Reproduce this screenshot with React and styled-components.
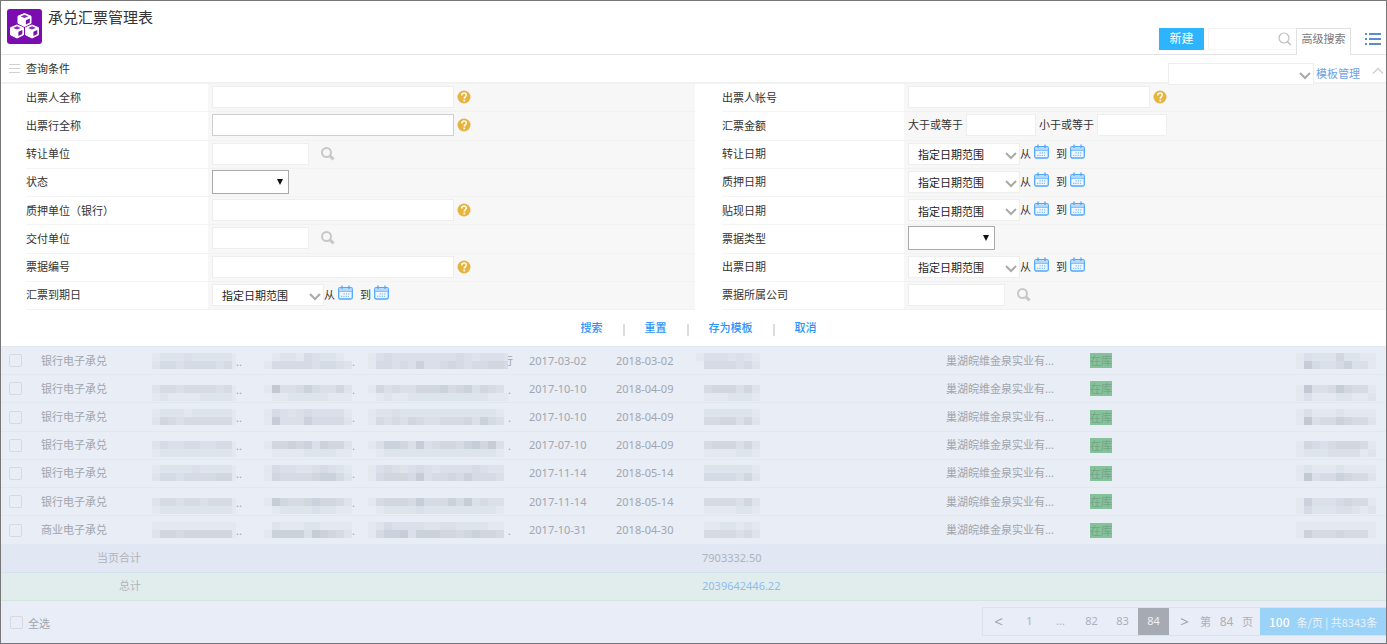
import React from 'react';
import styled, { createGlobalStyle, css } from 'styled-components';

const GlobalStyle = createGlobalStyle`
    * {
        box-sizing: border-box;
    }
    body {
        margin: 0;
        background: #fff;
        color: #333;
        font-family: "Noto Sans", "Noto Sans CJK SC", sans-serif;
        font-size: 11px;
        line-height: 16px;
    }
    button, input, select {
        margin: 0;
        padding: 0;
        font: inherit;
        color: inherit;
    }
    button {
        border: 0;
        background: none;
        cursor: pointer;
    }
    svg {
        display: block;
        flex: none;
    }
`;

const Page = styled.div`
    display: flex;
    flex-direction: column;
    min-height: 100vh;
    border: 1px solid #777;
`;

const Header = styled.header`
    display: flex;
    justify-content: space-between;
    height: 54px;
    padding-left: 6px;
    border-bottom: 1px solid #e4e4e4;
`;

const Brand = styled.div`
    display: flex;
    gap: 6px;
    padding-top: 8px;
`;

const Logo = styled.div`
    width: 35px;
    height: 35px;
    border-radius: 3px;
    background: #7a0cb0;
`;

const Title = styled.h1`
    margin: 0;
    font-size: 15px;
    font-weight: 400;
    line-height: 16px;
`;

const Tools = styled.div`
    display: flex;
    align-items: flex-start;
    padding-top: 27px;
`;

const CreateButton = styled.button`
    width: 45px;
    height: 22px;
    margin-right: 4px;
    background: #2eb4ff;
    color: #fff;
    font-size: 12px;
`;

const SearchBox = styled.label`
    display: flex;
    align-items: center;
    width: 88px;
    height: 22px;
    padding-right: 4px;
    border: 1px solid #f4f4f4;
    border-right: 0;
    input {
        flex: 1;
        min-width: 0;
        border: 0;
        outline: 0;
    }
`;

const AdvancedTab = styled.button`
    position: relative;
    width: 55px;
    height: 27px;
    padding-bottom: 6px;
    border: 1px solid #e0e0e0;
    border-bottom: 0;
    background: #fff;
    color: #777;
`;

const ListButton = styled.button`
    margin: 4px 4px 0 14px;
`;

const SectionBar = styled.div`
    display: flex;
    align-items: center;
    justify-content: space-between;
    height: 29px;
    padding: 0 2px 0 8px;
    border-bottom: 2px solid #f2f2f2;
`;

const SectionTitle = styled.div`
    display: flex;
    align-items: center;
    gap: 6px;
`;

const TemplateTools = styled.div`
    position: relative;
    display: flex;
    align-items: center;
    gap: 2px;
    padding-top: 10px;
    a {
        color: #6f9fe4;
        text-decoration: none;
    }
    button {
        padding: 0 0 6px 10px;
    }
`;

const Filters = styled.form`
    display: grid;
    grid-template-columns: 207px minmax(0, 487fr) 209px minmax(0, 482fr);
    grid-auto-rows: 1fr;
    min-height: 226px;
`;

const LabelCell = styled.div`
    display: flex;
    padding-left: ${props => (props.$second ? 27 : 25)}px;
    label {
        flex: 1;
        align-self: stretch;
        display: flex;
        align-items: center;
        border-bottom: 1px solid #f4f4f4;
    }
`;

const ValueCell = styled.div`
    display: flex;
    align-items: center;
    min-width: 0;
    padding: 0 0 1px 4px;
    border-bottom: 1px solid #f2f2f2;
    background: #f7f7f7;
`;

const widths = { full: 242, short: 97, amount: 70 };

const TextInput = styled.input`
    width: ${props => widths[props.$size]}px;
    height: 22px;
    border: 1px solid ${props => (props.$strong ? '#cfcfcf' : '#eee')};
    background: #fff;
`;

const IconButton = styled.button`
    margin-left: ${props => props.$gap}px;
`;

const SelectWrap = styled.div`
    position: relative;
    width: ${props => props.$width}px;
    svg {
        position: absolute;
        top: 9px;
        right: ${props => (props.$native ? 6 : 3)}px;
        pointer-events: none;
    }
    select {
        display: block;
        width: 100%;
        height: ${props => (props.$native ? 24 : 22)}px;
        padding: 3px 0 0 9px;
        border: 1px solid ${props => (props.$native ? '#a9a9a9' : '#eee')};
        background: #fff;
        color: #222;
        appearance: none;
    }
`;

const DateParts = styled.div`
    display: flex;
    align-items: center;
    button {
        margin: 0 7px 4px 3px;
    }
`;

const AmountParts = styled.div`
    display: flex;
    align-items: center;
    gap: 3px;
`;

const Actions = styled.div`
    display: flex;
    align-items: center;
    justify-content: center;
    gap: 20px;
    height: 36px;
    padding-left: 10px;
    button {
        color: #2b93fb;
        font-weight: 500;
    }
    i {
        width: 2px;
        height: 12px;
        margin-top: 4px;
        background: #ddd;
    }
`;

const Table = styled.table`
    width: 100%;
    height: 255px;
    border-collapse: collapse;
    table-layout: fixed;
    background: #e8edf6;
    color: #a2a6ae;
    tr {
        height: 28px;
    }
    td {
        padding: 0;
        text-align: left;
        white-space: nowrap;
    }
`;

const Row = styled.tr`
    td {
        border-top: 1px solid #e3e7f0;
    }
`;

const SumRow = styled.tr`
    background: ${props => (props.$grand ? '#e1eded' : '#e1e7f3')};
    td {
        border-bottom: 1px solid ${props => (props.$grand ? '#d2e6dd' : '#d6e1ee')};
        color: #b0b3bb;
    }
    td:first-child {
        padding-right: 11px;
        text-align: right;
    }
    a {
        color: #8dbcf0;
        text-decoration: none;
    }
`;

const SumValue = styled.div`
    padding-left: 6px;
`;

const Check = styled.input`
    display: block;
    width: 13px;
    height: 13px;
    margin: 0 0 0 8px;
    border: 1px solid #d6d9e0;
    border-radius: 2px;
    appearance: none;
`;

const MaskedCell = styled.div`
    display: flex;
    align-items: center;
    height: 24px;
`;

const Cover = styled.div`
    position: relative;
    z-index: 1;
    background: #e8edf6;
`;

const Tail = styled.span`
    padding-top: 2px;
    ${props => props.$under && css`
        margin-left: -6px;
        padding-top: 0;
    `}
`;

const Tag = styled.span`
    display: block;
    width: 22px;
    height: 15px;
    background: #85c29a;
    color: #76a488;
    line-height: 15px;
`;

const Footer = styled.footer`
    flex: 1;
    display: flex;
    align-items: flex-start;
    justify-content: space-between;
    padding-top: 6px;
    background: #e9edf7;
    color: #a2a6ae;
`;

const SelectAll = styled.label`
    display: flex;
    align-items: center;
    gap: 5px;
    padding: 5px 0 0 1px;
    span {
        padding-top: 4px;
    }
`;

const Pager = styled.nav`
    display: flex;
    align-items: center;
    height: 29px;
    border: 1px solid #dde1ea;
    border-right: 0;
    color: #adb0b8;
`;

const PageButton = styled.button`
    width: 31px;
    height: 27px;
    padding-bottom: 1px;
    ${props => props.$active && css`
        background: #a6aab3;
        color: #eef0f5;
    `}
    ${props => props.$arrow && css`
        font-size: 15px;
        color: #9fa3ac;
    `}
`;

const JumpTo = styled.label`
    display: flex;
    align-items: center;
    width: 60px;
    input {
        width: 31px;
        height: 22px;
        border: 0;
        background: none;
        font-size: 12px;
        text-align: center;
    }
`;

const PageSize = styled.button`
    display: flex;
    align-items: center;
    gap: 7px;
    width: 126px;
    height: 27px;
    padding-left: 9px;
    background: #9bd2f7;
    color: #e9f3fc;
    font-family: "Noto Sans CJK SC", sans-serif;
    white-space: nowrap;
    b {
        color: #fff;
        font-size: 12px;
        font-weight: 500;
    }
`;

const CubesIcon = () => (
    <svg width="35" height="35" viewBox="0 0 35 35">
        {[[17.5, 11], [10, 22.5], [25, 22.5]].map(([x, y]) => (
            <g key={x} transform={`translate(${x} ${y})`}>
                <path d="M0-6.500L6.500-3.800V3.300L0 6.500-6.500 3.300V-3.800z" fill="#fff" stroke="#fff" strokeLinejoin="round" />
                <path d="M0-5.200L3.800-3.500 0-1.900-3.800-3.500z" fill="#8a2cba" />
                <path d="M1.400.2L5.300-1.600V2.500L1.400 4.500z" fill="#7a0cb0" />
            </g>
        ))}
    </svg>
);

const Magnifier = () => (
    <svg width="14" height="14" viewBox="0 0 14 14" fill="none" stroke="#c8c8c8">
        <circle cx="5.5" cy="5.5" r="4.5" strokeWidth="2" />
        <path d="M8.8 8.8l3.800 3.600" strokeWidth="3" />
    </svg>
);

const ThinMagnifier = () => (
    <svg width="14" height="14" viewBox="0 0 14 14" fill="none" stroke="#bfbfbf">
        <circle cx="6" cy="6" r="5" strokeWidth="1.2" />
        <path d="M9.7 10l3.2 3" strokeWidth="1.6" />
    </svg>
);

const ListIcon = () => (
    <svg width="17" height="14" viewBox="0 0 17 14" fill="#5b8dcb">
        {[0, 5, 10].map(y => (
            <g key={y}>
                <rect x="0" y={y + 1} width="2" height="2" />
                <rect x="4" y={y + 1} width="12" height="2" />
            </g>
        ))}
    </svg>
);

const BarsIcon = () => (
    <svg width="11" height="10" viewBox="0 0 11 10" stroke="#d0d0d0">
        <path d="M0 .5h11M0 4.500h11M0 8.500h11" />
    </svg>
);

const ChevronDown = () => (
    <svg width="12" height="8" viewBox="0 0 12 8" fill="none" stroke="#aaa" strokeWidth="2">
        <path d="M1 1l5 5 5-5" />
    </svg>
);

const ChevronUp = () => (
    <svg width="12" height="8" viewBox="0 0 12 8" fill="none" stroke="#d0d0d0" strokeWidth="1.3">
        <path d="M1 6.5l5-5 5 5" />
    </svg>
);

const Triangle = () => (
    <svg width="6" height="6" viewBox="0 0 6 6">
        <path d="M0 0h6L3 6z" fill="#111" />
    </svg>
);

const HelpIcon = () => (
    <svg width="14" height="14" viewBox="0 0 14 14" fill="none">
        <circle cx="7" cy="7" r="6.5" fill="#e4b340" />
        <path d="M4.800 5.400C4.800 3.800 5.800 3 7.100 3s2.200.8 2.200 2.100C9.300 6.600 7.300 6.700 7.300 8.800" stroke="#fff8e0" strokeWidth="1.7" />
        <rect x="6.300" y="9.700" width="1.900" height="1.700" fill="#fff8e0" />
    </svg>
);

const CalendarIcon = () => (
    <svg width="15" height="15" viewBox="0 0 15 15" fill="none">
        <rect x=".7" y="2.700" width="13.600" height="11.300" rx="1.500" fill="#f0f8ff" stroke="#53a7fb" strokeWidth="1.300" />
        <path d="M1.300 3.300h12.400v2.500H1.300z" fill="#b5d9fe" />
        <path d="M1 6.300h13" stroke="#6db3fb" />
        <path d="M4 .5v3.500M11 .5v3.500" stroke="#53a7fb" strokeWidth="1.300" />
        <path d="M5.500 8.800h7M3 11.300h8" stroke="#86c0fc" strokeWidth="1.200" strokeDasharray="1.300 1" />
    </svg>
);

// each digit is one 8px block, a higher digit is a darker block
const Mosaic = ({ bands, top, width }) => (
    <svg width={width} height="24" viewBox={`0 0 ${width} 24`} shapeRendering="crispEdges">
        {bands.map((band, i) => band.split('').map((level, j) => (
            <rect
                key={`${i}-${j}`}
                x={j * 8}
                y={top + i * 8}
                width="8"
                height="8"
                fill="#646c78"
                fillOpacity={level * 0.035}
            />
        )))}
    </svg>
);

const rows = [
    {
        type: '银行电子承兑', from: '2017-03-02', to: '2018-03-02', top: 4, end: '行',
        a: ['12223222221', '24434444341'],
        b: ['01221432210', '14444434432'],
        c: ['134333333334323332', '144343633454344554'],
        d: ['13332321', '04444342'],
        e: ['1322252211', '1743346331'],
    },
    {
        type: '银行电子承兑', from: '2017-10-10', to: '2018-04-09', top: 8, end: '.',
        a: ['24434444341', '12111122221'],
        b: ['18334643352', '01122222111'],
        c: ['153433555645635430', '012112222222222111'],
        d: ['04555352', '01112221'],
        e: ['1833475441', '1311122112'],
    },
    {
        type: '银行电子承兑', from: '2017-10-10', to: '2018-04-09', top: 4, end: '.',
        a: ['12221222221', '25434444441'],
        b: ['14323433331', '17333644442'],
        c: ['122322222222222210', '143435433444536430'],
        d: ['02222221', '04455352'],
        e: ['1311121111', '1834465442'],
    },
    {
        type: '银行电子承兑', from: '2017-07-10', to: '2018-04-09', top: 8, end: '.',
        a: ['24334433441', '12222222221'],
        b: ['15565636552', '01111222211'],
        c: ['136653734554675730', '012222222222222210'],
        d: ['04555352', '01111221'],
        e: ['1543455541', '1222333312'],
    },
    {
        type: '银行电子承兑', from: '2017-11-14', to: '2018-05-14', top: 4, end: '',
        a: ['12222322221', '24434444551'],
        b: ['14332234321', '15444456642'],
        c: ['134323432333343220', '145554734454644430'],
        d: ['02222221', '04444352'],
        e: ['1211121111', '1834465442'],
    },
    {
        type: '银行电子承兑', from: '2017-11-14', to: '2018-05-14', top: 8, end: '',
        a: ['24434434441', '12222222221'],
        b: ['17544565542', '01222232211'],
        c: ['145554744464734330', '012222322222222210'],
        d: ['04444352', '01111221'],
        e: ['1633345441', '1422233212'],
    },
    {
        type: '商业电子承兑', from: '2017-10-31', to: '2018-04-30', top: 4, end: '.',
        a: ['11111111111', '25545555551'],
        b: ['02111221111', '16666376542'],
        c: ['124333322332222110', '146673666554565540'],
        d: ['01122121', '04444342'],
        e: ['1111111111', '1644454441'],
    },
];

const HelpInput = ({ id, strong }) => (
    <>
        <TextInput id={id} type="text" $size="full" $strong={strong} />
        <IconButton type="button" aria-label="帮助" $gap={3}><HelpIcon /></IconButton>
    </>
);

const LookupInput = ({ id }) => (
    <>
        <TextInput id={id} type="text" $size="short" />
        <IconButton type="button" aria-label="选择" $gap={12}><Magnifier /></IconButton>
    </>
);

const PlainSelect = ({ id, width }) => (
    <SelectWrap $width={width} $native>
        <select id={id}><option></option></select>
        <Triangle />
    </SelectWrap>
);

const DateRange = ({ id }) => (
    <>
        <SelectWrap $width={112}>
            <select id={id}><option>指定日期范围</option></select>
            <ChevronDown />
        </SelectWrap>
        <DateParts>
            从<button type="button" aria-label="开始日期"><CalendarIcon /></button>
            到<button type="button" aria-label="结束日期"><CalendarIcon /></button>
        </DateParts>
    </>
);

const AmountRange = ({ id }) => (
    <AmountParts>
        <label htmlFor={id}>大于或等于</label>
        <TextInput id={id} type="text" $size="amount" />
        <label htmlFor={`${id}-max`}>小于或等于</label>
        <TextInput id={`${id}-max`} type="text" $size="amount" />
    </AmountParts>
);

const fields = [
    { label: '出票人全称', field: <HelpInput id="f0" /> },
    { label: '出票人帐号', field: <HelpInput id="f1" /> },
    { label: '出票行全称', field: <HelpInput id="f2" strong /> },
    { label: '汇票金额', field: <AmountRange id="f3" /> },
    { label: '转让单位', field: <LookupInput id="f4" /> },
    { label: '转让日期', field: <DateRange id="f5" /> },
    { label: '状态', field: <PlainSelect id="f6" width={77} /> },
    { label: '质押日期', field: <DateRange id="f7" /> },
    { label: '质押单位（银行）', field: <HelpInput id="f8" /> },
    { label: '贴现日期', field: <DateRange id="f9" /> },
    { label: '交付单位', field: <LookupInput id="f10" /> },
    { label: '票据类型', field: <PlainSelect id="f11" width={87} /> },
    { label: '票据编号', field: <HelpInput id="f12" /> },
    { label: '出票日期', field: <DateRange id="f13" /> },
    { label: '汇票到期日', field: <DateRange id="f14" /> },
    { label: '票据所属公司', field: <LookupInput id="f15" /> },
];

const columns = [40, 111, 112, 104, 161, 87, 80, 250, 144, undefined, 90];

export default function App() {
    return (
        <Page>
            <GlobalStyle />
            <Header>
                <Brand>
                    <Logo><CubesIcon /></Logo>
                    <Title>承兑汇票管理表</Title>
                </Brand>
                <Tools>
                    <CreateButton type="button">新建</CreateButton>
                    <SearchBox>
                        <input type="text" aria-label="搜索" />
                        <ThinMagnifier />
                    </SearchBox>
                    <AdvancedTab type="button">高级搜索</AdvancedTab>
                    <ListButton type="button" aria-label="列表"><ListIcon /></ListButton>
                </Tools>
            </Header>

            <SectionBar>
                <SectionTitle><BarsIcon />查询条件</SectionTitle>
                <TemplateTools>
                    <SelectWrap $width={146}>
                        <select aria-label="模板"><option></option></select>
                        <ChevronDown />
                    </SelectWrap>
                    <a href="#template">模板管理</a>
                    <button type="button" aria-label="收起"><ChevronUp /></button>
                </TemplateTools>
            </SectionBar>

            <Filters id="filters">
                {fields.map(({ label, field }, i) => (
                    <React.Fragment key={label}>
                        <LabelCell $second={i % 2 === 1}>
                            <label htmlFor={`f${i}`}>{label}</label>
                        </LabelCell>
                        <ValueCell>{field}</ValueCell>
                    </React.Fragment>
                ))}
            </Filters>

            <Actions>
                <button type="submit" form="filters">搜索</button>
                <i />
                <button type="reset" form="filters">重置</button>
                <i />
                <button type="button">存为模板</button>
                <i />
                <button type="button">取消</button>
            </Actions>

            <Table>
                <colgroup>
                    {columns.map((width, i) => <col key={i} width={width} />)}
                </colgroup>
                <tbody>
                    {rows.map((row, i) => (
                        <Row key={i}>
                            <td><Check type="checkbox" aria-label={row.type} /></td>
                            <td>{row.type}</td>
                            <td><MaskedCell><Mosaic bands={row.a} top={row.top} width={84} /><Tail>..</Tail></MaskedCell></td>
                            <td><MaskedCell><Mosaic bands={row.b} top={row.top} width={88} /><Tail>.</Tail></MaskedCell></td>
                            <td>
                                <MaskedCell>
                                    <Cover><Mosaic bands={row.c} top={row.top} width={140} /></Cover>
                                    <Tail $under={row.end === '行'}>{row.end}</Tail>
                                </MaskedCell>
                            </td>
                            <td>{row.from}</td>
                            <td>{row.to}</td>
                            <td><Mosaic bands={row.d} top={row.top} width={64} /></td>
                            <td>巢湖皖维金泉实业有...</td>
                            <td><Tag>在库</Tag></td>
                            <td><Mosaic bands={row.e} top={row.top} width={80} /></td>
                        </Row>
                    ))}
                    <SumRow>
                        <td colSpan={2}>当页合计</td>
                        <td colSpan={5} />
                        <td><SumValue>7903332.50</SumValue></td>
                        <td colSpan={3} />
                    </SumRow>
                    <SumRow $grand>
                        <td colSpan={2}>总计</td>
                        <td colSpan={5} />
                        <td><SumValue><a href="#total">2039642446.22</a></SumValue></td>
                        <td colSpan={3} />
                    </SumRow>
                </tbody>
            </Table>

            <Footer>
                <SelectAll><Check type="checkbox" /><span>全选</span></SelectAll>
                <Pager>
                    <PageButton type="button" $arrow>&lt;</PageButton>
                    <PageButton type="button">1</PageButton>
                    <PageButton type="button">...</PageButton>
                    <PageButton type="button">82</PageButton>
                    <PageButton type="button">83</PageButton>
                    <PageButton type="button" $active>84</PageButton>
                    <PageButton type="button" $arrow>&gt;</PageButton>
                    <JumpTo>第<input type="text" defaultValue="84" />页</JumpTo>
                    <PageSize type="button"><b>100</b>条/页 | 共8343条</PageSize>
                </Pager>
            </Footer>
        </Page>
    );
}
